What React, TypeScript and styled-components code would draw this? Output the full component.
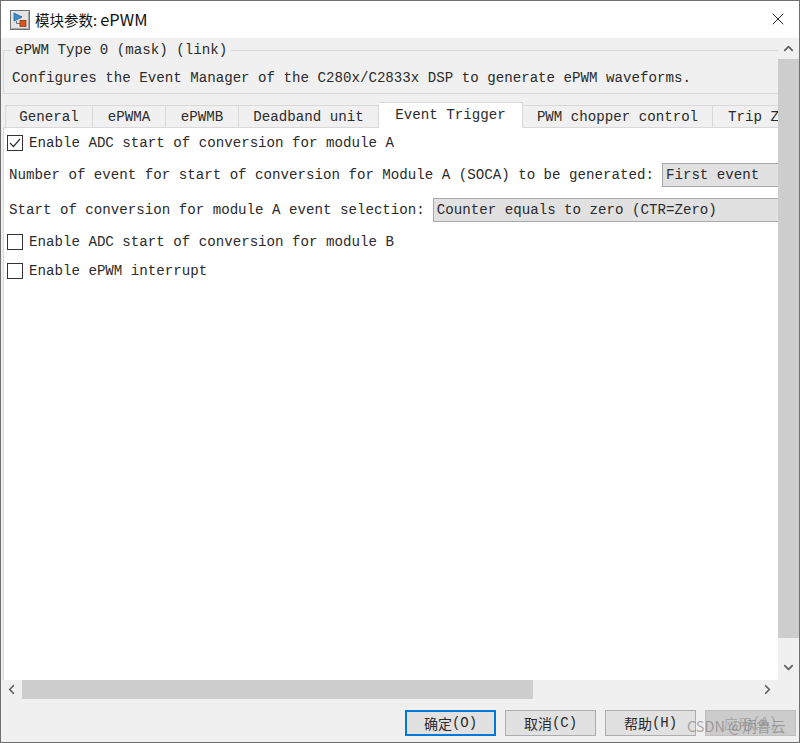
import React, { FC } from 'react';
import styled, { createGlobalStyle } from 'styled-components';
import { X, ChevronUp, ChevronDown, ChevronLeft, ChevronRight } from 'lucide-react';

const GlobalStyle = createGlobalStyle`
  html, body {
    margin: 0;
    padding: 0;
    background: #f0f0f0;
  }
  * {
    box-sizing: border-box;
  }
`

const WindowStyle = styled.div`
  width: 800px;
  height: 743px;
  border: 1px solid #6f6f6f;
  background-color: #f0f0f0;
  display: flex;
  flex-direction: column;
  position: relative;
  overflow: hidden;
  font-family: "Liberation Mono", "Noto Sans CJK SC", monospace;
  font-size: 14.15px;
  color: #2b2b2b;
`

const TitleBar = styled.div`
  height: 37px;
  flex: none;
  background-color: #fff;
  display: flex;
  align-items: center;
  padding: 0 9px;
  color: #111;
`

const TitleText = styled.div`
  margin-left: 5px;
  margin-bottom: 2px;
  font-family: "Noto Sans CJK SC", "Liberation Sans", sans-serif;
  font-size: 14.5px;
`

const TitleLatin = styled.span`
  font-size: 16.4px;
`

const CloseButton = styled.div`
  margin-left: auto;
  margin-right: 2px;
  margin-bottom: 2px;
  display: flex;
  color: #111;
`

const ScrollArea = styled.div`
  height: 661px;
  flex: none;
  display: grid;
  grid-template-columns: 777px 21px;
  grid-template-rows: 642px 19px;
`

const Content = styled.div`
  grid-column: 1;
  grid-row: 1;
  padding: 5px 0 0 2px;
  overflow: hidden;
  display: flex;
  flex-direction: column;
`

const MaskBox = styled.fieldset`
  margin: 0;
  padding: 0 8px 0 8px;
  height: 51px;
  border: 1px solid #d9d9d9;
  border-right: 0;
  flex: none;
`

const MaskLegend = styled.legend`
  margin-left: -1px;
  padding: 0 4px;
  height: 14px;
  line-height: 14px;
  font-size: 14.15px;
`

const MaskText = styled.div`
  margin-top: 11px;
  line-height: 20px;
  white-space: nowrap;
`

const TabBar = styled.div`
  margin-top: 8px;
  height: 26px;
  padding-left: 2px;
  display: flex;
  align-items: flex-end;
  flex: none;
  position: relative;
  z-index: 1;
`

const Tab = styled.div<{ $width: number; $active?: boolean }>`
  width: ${p => p.$width}px;
  height: ${p => (p.$active ? 26 : 23)}px;
  flex: none;
  display: flex;
  align-items: center;
  justify-content: center;
  white-space: nowrap;
  overflow: hidden;
  background-color: ${p => (p.$active ? '#fff' : '#f0f0f0')};
  border: 1px solid #d9d9d9;
  border-left: 0;
  border-bottom-color: ${p => (p.$active ? '#fff' : '#d9d9d9')};
  &:first-child {
    border-left: 1px solid #d9d9d9;
  }
`

const TripTab = styled(Tab)`
  justify-content: flex-start;
  padding-left: 15px;
  border-right: 0;
`

const TabPage = styled.div`
  flex: 1;
  margin-top: -1px;
  background-color: #fff;
  border-left: 1px solid #d9d9d9;
  border-top: 1px solid #d9d9d9;
  padding: 5px 0 0 3px;
`

const CheckRow = styled.label<{ $top?: number }>`
  height: 20px;
  margin-top: ${p => p.$top || 0}px;
  display: flex;
  align-items: center;
  white-space: nowrap;
`

const CheckBox = styled.span`
  width: 16px;
  height: 16px;
  margin-right: 6px;
  flex: none;
  border: 1px solid #333;
  background-color: #fff;
  display: flex;
  align-items: center;
  justify-content: center;
`

const FieldRow = styled.div<{ $top: number }>`
  height: 24px;
  margin-top: ${p => p.$top}px;
  display: flex;
  align-items: center;
  white-space: nowrap;
  padding-left: 2px;
`

const SelectBox = styled.div<{ $left: number }>`
  margin-left: ${p => p.$left}px;
  flex: 1;
  height: 24px;
  line-height: 22px;
  padding-left: 3px;
  background-color: #e1e1e1;
  border: 1px solid #a9a9a9;
  border-right: 0;
`

const VerticalBar = styled.div`
  grid-column: 2;
  grid-row: 1 / 3;
  display: flex;
  flex-direction: column;
  align-items: center;
  color: #5f5f5f;
`

const ArrowCell = styled.div`
  width: 100%;
  height: 21px;
  flex: none;
  display: flex;
  align-items: center;
  justify-content: center;
`

const VerticalThumb = styled.div`
  width: 100%;
  height: 579px;
  background-color: #cdcdcd;
`

const VerticalRest = styled.div`
  flex: 1;
  display: flex;
  align-items: flex-start;
  justify-content: center;
  padding-top: 22px;
`

const HorizontalBar = styled.div`
  grid-column: 1;
  grid-row: 2;
  display: flex;
  align-items: stretch;
  color: #5f5f5f;
`

const HorizontalArrow = styled.div`
  width: 21px;
  flex: none;
  display: flex;
  align-items: center;
  justify-content: center;
`

const HorizontalThumb = styled.div`
  width: 511px;
  background-color: #cdcdcd;
`

const HorizontalRest = styled.div`
  flex: 1;
  display: flex;
  align-items: center;
  justify-content: flex-end;
  padding-right: 3px;
`

const ButtonRow = styled.div`
  flex: 1;
  display: flex;
  justify-content: flex-end;
  gap: 9px;
  padding: 11px 3px 0 0;
`

const DialogButton = styled.div<{ $primary?: boolean; $disabled?: boolean }>`
  width: 91px;
  height: 26px;
  display: flex;
  align-items: center;
  justify-content: center;
  font-family: "Noto Sans CJK SC", "Liberation Mono", monospace;
  font-size: 14px;
  background-color: ${p => (p.$disabled ? '#cccccc' : '#e1e1e1')};
  border: ${p => (p.$primary ? '2px solid #0078d7' : p.$disabled ? '1px solid #bfbfbf' : '1px solid #adadad')};
  color: ${p => (p.$disabled ? '#a8a8a8' : '#2b2b2b')};
`

const ButtonKey = styled.span`
  font-family: "Liberation Mono", monospace;
`

const Watermark = styled.div`
  position: absolute;
  left: 686px;
  top: 714px;
  font-family: "Noto Sans CJK SC", "Liberation Sans", sans-serif;
  font-size: 14.5px;
  color: rgba(120, 120, 120, 0.6);
  white-space: nowrap;
`

const AppIcon: FC = () => (
  <svg width="20" height="20" viewBox="0 0 20 20">
    <rect x="0.5" y="0.5" width="19" height="19" fill="#e4e4e4" stroke="#707070" />
    <path d="M1.5 18.5 H18.5 V1.5" fill="none" stroke="#a8a8a8" />
    <path d="M4 3 L4 11 L12 7 Z" fill="#3f8fd0" stroke="#1f5f9a" strokeWidth="0.8" />
    <path d="M6.5 11 L6.5 13.5 L10 13.5" fill="none" stroke="#555" strokeWidth="0.8" />
    <rect x="10" y="10.5" width="6" height="6" fill="#d9541e" stroke="#8a3a14" strokeWidth="0.8" />
  </svg>
)

const Check: FC = () => (
  <svg width="12" height="10" viewBox="0 0 12 10">
    <path d="M1 5 L4.5 8.5 L11 1" fill="none" stroke="#333" strokeWidth="1.2" />
  </svg>
)

const tabs = [
  { label: 'General', width: 88 },
  { label: 'ePWMA', width: 73 },
  { label: 'ePWMB', width: 73 },
  { label: 'Deadband unit', width: 140 },
  { label: 'Event Trigger', width: 144, active: true },
  { label: 'PWM chopper control', width: 190 },
]

const buttons = [
  { label: '确定', key: '(O)', primary: true },
  { label: '取消', key: '(C)' },
  { label: '帮助', key: '(H)' },
  { label: '应用', key: '(A)', disabled: true },
]

const App: FC = () => {
  return <WindowStyle>
    <GlobalStyle />
    <TitleBar>
      <AppIcon />
      <TitleText>模块参数: <TitleLatin>ePWM</TitleLatin></TitleText>
      <CloseButton><X size={20} strokeWidth={1.1} /></CloseButton>
    </TitleBar>
    <ScrollArea>
      <Content>
        <MaskBox>
          <MaskLegend>ePWM Type 0 (mask) (link)</MaskLegend>
          <MaskText>Configures the Event Manager of the C280x/C2833x DSP to generate ePWM waveforms.</MaskText>
        </MaskBox>
        <TabBar>
          {tabs.map(t => <Tab key={t.label} $width={t.width} $active={t.active}>{t.label}</Tab>)}
          <TripTab $width={66}>Trip Zone</TripTab>
        </TabBar>
        <TabPage>
          <CheckRow><CheckBox><Check /></CheckBox>Enable ADC start of conversion for module A</CheckRow>
          <FieldRow $top={10}>
            Number of event for start of conversion for Module A (SOCA) to be generated:
            <SelectBox $left={8}>First event</SelectBox>
          </FieldRow>
          <FieldRow $top={11}>
            Start of conversion for module A event selection:
            <SelectBox $left={8}>Counter equals to zero (CTR=Zero)</SelectBox>
          </FieldRow>
          <CheckRow $top={10}><CheckBox />Enable ADC start of conversion for module B</CheckRow>
          <CheckRow $top={9}><CheckBox />Enable ePWM interrupt</CheckRow>
        </TabPage>
      </Content>
      <VerticalBar>
        <ArrowCell><ChevronUp size={15} strokeWidth={2.8} /></ArrowCell>
        <VerticalThumb />
        <VerticalRest><ChevronDown size={15} strokeWidth={2.8} /></VerticalRest>
      </VerticalBar>
      <HorizontalBar>
        <HorizontalArrow><ChevronLeft size={15} strokeWidth={2.8} /></HorizontalArrow>
        <HorizontalThumb />
        <HorizontalRest><ChevronRight size={15} strokeWidth={2.8} /></HorizontalRest>
      </HorizontalBar>
    </ScrollArea>
    <ButtonRow>
      {buttons.map(b => (
        <DialogButton key={b.key} $primary={b.primary} $disabled={b.disabled}>
          {b.label}<ButtonKey>{b.key}</ButtonKey>
        </DialogButton>
      ))}
    </ButtonRow>
    <Watermark>CSDN @炳鲁云</Watermark>
  </WindowStyle>
}

export default App
